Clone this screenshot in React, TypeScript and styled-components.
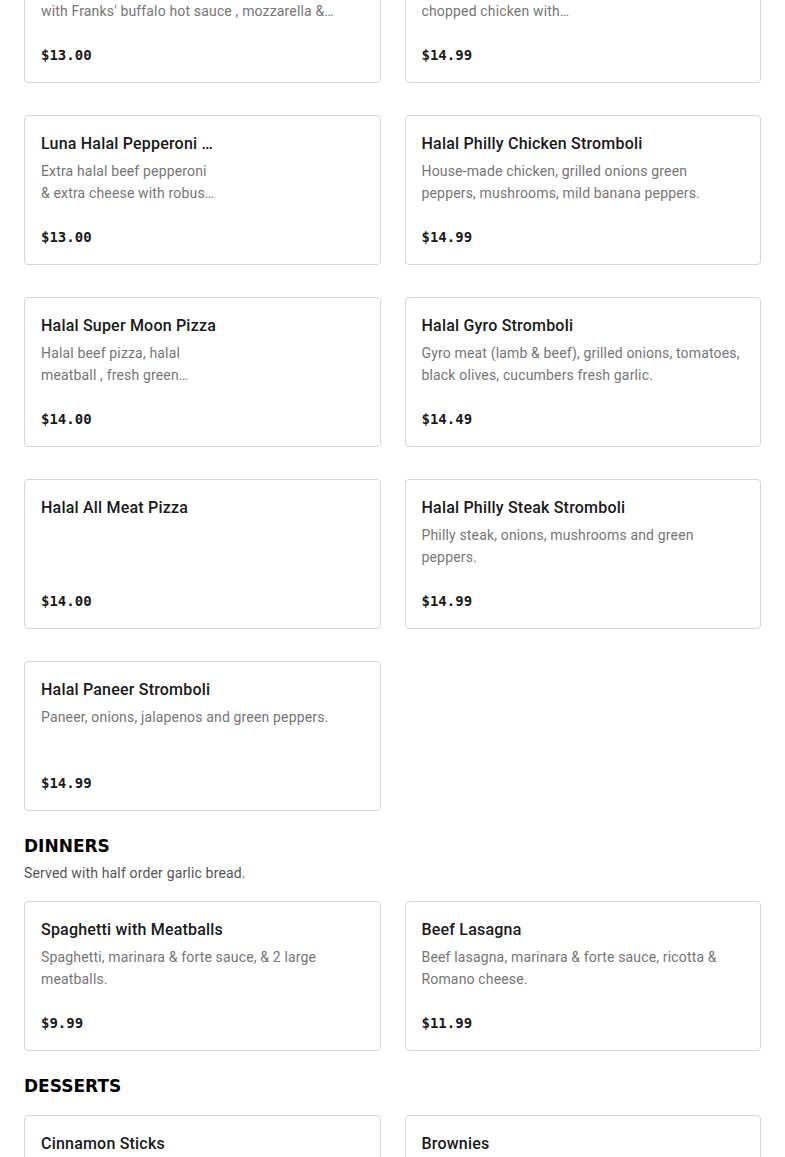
import React from 'react';
import styled, { createGlobalStyle } from 'styled-components';

const GlobalStyle = createGlobalStyle`
  html, body {
    margin: 0;
    padding: 0;
    background: #ffffff;
  }
  body {
    font-family: Roboto, "Liberation Sans", sans-serif;
    color: #191919;
    overflow: hidden;
  }
  * {
    box-sizing: border-box;
  }
`

// the reference is scrolled part-way down the menu
const Page = styled.main`
  margin-top: -67px;
  padding: 0 24px 40px;
`

const Section = styled.section`
  & + & {
    margin-top: 23px;
  }
`

const SectionTitle = styled.h2`
  margin: 0;
  font-family: "DejaVu Sans", sans-serif;
  font-size: 17px;
  font-weight: 700;
  line-height: 24px;
  color: #000000;
`

const SectionNote = styled.p`
  margin: 4px 0 0;
  font-size: 14px;
  line-height: 22px;
  letter-spacing: 0.16px;
  color: #555555;
`

const Grid = styled.div<{ $offset: boolean }>`
  display: grid;
  grid-template-columns: minmax(0, 1fr) minmax(0, 1fr);
  column-gap: 24px;
  row-gap: 32px;
  margin-top: ${p => (p.$offset ? '17px' : '0')};
`

const Card = styled.div`
  display: flex;
  gap: 16px;
  height: 150px;
  padding: 16px 16px 17px;
  border: 1px solid #d6d6d6;
  border-radius: 4px;
  background: #ffffff;
`

const Body = styled.div`
  flex: 1;
  min-width: 0;
  display: flex;
  flex-direction: column;
`

// photo slot; the pictures did not load in the reference, so it stays blank
const Thumb = styled.div`
  flex: 0 0 130px;
`

const Name = styled.h3`
  margin: 0;
  font-size: 16px;
  font-weight: 500;
  line-height: 24px;
  letter-spacing: 0.2px;
  color: #191919;
  white-space: nowrap;
  overflow: hidden;
  text-overflow: ellipsis;
`

const Desc = styled.p`
  margin: 4px 0 0;
  font-size: 14px;
  line-height: 22px;
  letter-spacing: 0.16px;
  color: #767676;
  display: -webkit-box;
  -webkit-line-clamp: 2;
  -webkit-box-orient: vertical;
  overflow: hidden;
`

const Price = styled.span`
  margin-top: auto;
  font-family: "DejaVu Sans Mono", "Liberation Mono", monospace;
  font-size: 14px;
  font-weight: 700;
  line-height: 20px;
  color: #191919;
`

type Item = {
  name: string;
  desc?: string;
  price: string;
  thumb?: boolean;
};

type MenuSection = {
  title?: string;
  note?: string;
  items: Item[];
};

const menu: MenuSection[] = [
  {
    items: [
      {
        name: 'Halal Buffalo Chicken Pizza',
        desc: "Grilled halal chicken breast, red onions, topped with Franks' buffalo hot sauce , mozzarella & provolone cheese.",
        price: '$13.00',
      },
      {
        name: 'Halal Buffalo Stromboli',
        desc: 'Halal hot buffalo sauce, chopped chicken with mozzarella and blue cheese.',
        price: '$14.99',
        thumb: true,
      },
      {
        name: 'Luna Halal Pepperoni Pizza',
        desc: 'Extra halal beef pepperoni & extra cheese with robust tomato sauce.',
        price: '$13.00',
        thumb: true,
      },
      {
        name: 'Halal Philly Chicken Stromboli',
        desc: 'House-made chicken, grilled onions green peppers, mushrooms, mild banana peppers.',
        price: '$14.99',
      },
      {
        name: 'Halal Super Moon Pizza',
        desc: 'Halal beef pizza, halal meatball , fresh green peppers, onions and mushrooms.',
        price: '$14.00',
        thumb: true,
      },
      {
        name: 'Halal Gyro Stromboli',
        desc: 'Gyro meat (lamb & beef), grilled onions, tomatoes, black olives, cucumbers fresh garlic.',
        price: '$14.49',
      },
      {
        name: 'Halal All Meat Pizza',
        price: '$14.00',
        thumb: true,
      },
      {
        name: 'Halal Philly Steak Stromboli',
        desc: 'Philly steak, onions, mushrooms and green peppers.',
        price: '$14.99',
      },
      {
        name: 'Halal Paneer Stromboli',
        desc: 'Paneer, onions, jalapenos and green peppers.',
        price: '$14.99',
      },
    ],
  },
  {
    title: 'DINNERS',
    note: 'Served with half order garlic bread.',
    items: [
      {
        name: 'Spaghetti with Meatballs',
        desc: 'Spaghetti, marinara & forte sauce, & 2 large meatballs.',
        price: '$9.99',
      },
      {
        name: 'Beef Lasagna',
        desc: 'Beef lasagna, marinara & forte sauce, ricotta & Romano cheese.',
        price: '$11.99',
      },
    ],
  },
  {
    title: 'DESSERTS',
    items: [
      {
        name: 'Cinnamon Sticks',
        desc: 'Baked sticks with cinnamon sugar and icing.',
        price: '$5.99',
      },
      {
        name: 'Brownies',
        desc: 'Fresh baked chocolate brownies.',
        price: '$4.99',
      },
    ],
  },
];

function MenuCard({ item }: { item: Item }) {
  return (
    <Card>
      <Body>
        <Name>{item.name}</Name>
        {item.desc && <Desc>{item.desc}</Desc>}
        <Price>{item.price}</Price>
      </Body>
      {item.thumb && <Thumb />}
    </Card>
  );
}

export default function App() {
  return (
    <>
      <GlobalStyle />
      <Page>
        {menu.map((section, i) => (
          <Section key={i}>
            {section.title && <SectionTitle>{section.title}</SectionTitle>}
            {section.note && <SectionNote>{section.note}</SectionNote>}
            <Grid $offset={!!section.title}>
              {section.items.map(item => (
                <MenuCard key={item.name} item={item} />
              ))}
            </Grid>
          </Section>
        ))}
      </Page>
    </>
  );
}
